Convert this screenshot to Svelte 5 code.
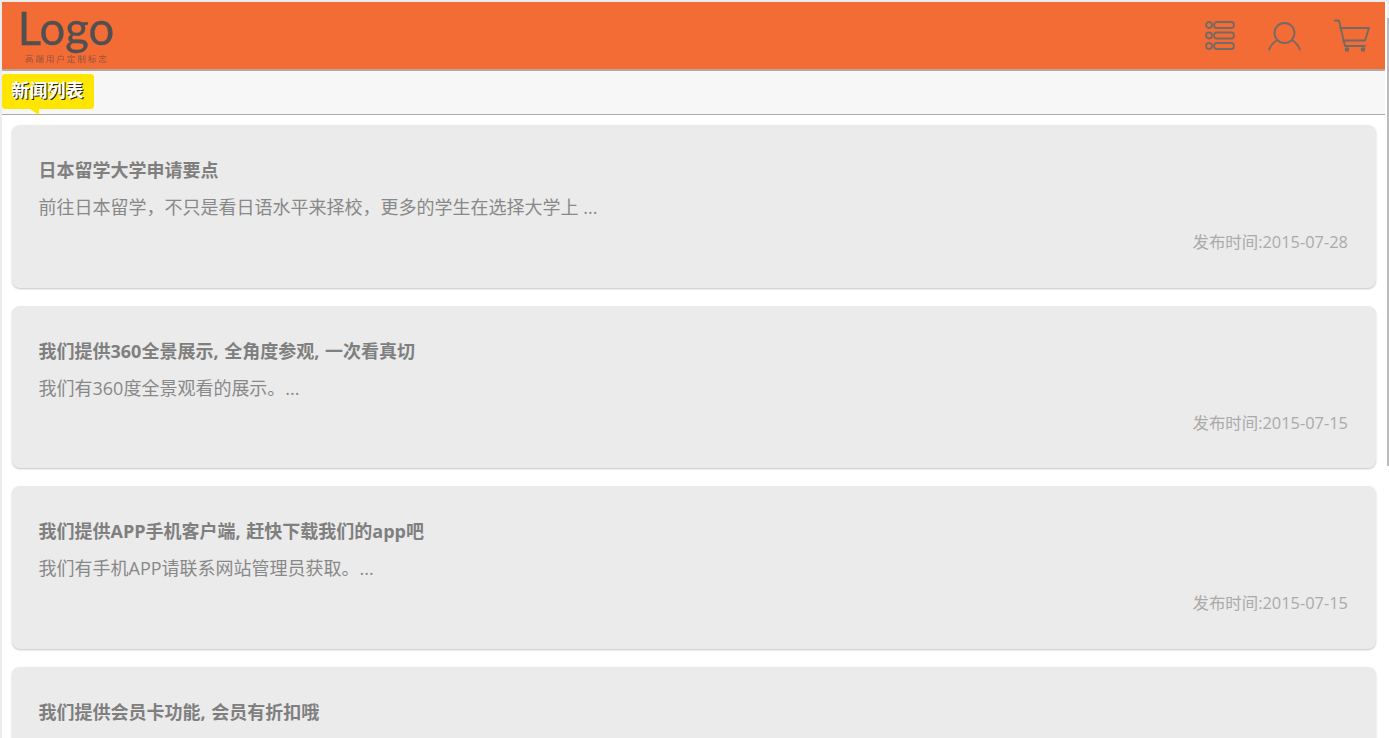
<script>
  const news = [
    { title: '日本留学大学申请要点', desc: '前往日本留学，不只是看日语水平来择校，更多的学生在选择大学上 ...', time: '2015-07-28' },
    { title: '我们提供360全景展示, 全角度参观, 一次看真切', desc: '我们有360度全景观看的展示。...', time: '2015-07-15' },
    { title: '我们提供APP手机客户端, 赶快下载我们的app吧', desc: '我们有手机APP请联系网站管理员获取。...', time: '2015-07-15' },
    { title: '我们提供会员卡功能, 会员有折扣哦' }
  ];
</script>

<div class="page">
  <header class="top">
    <div class="logo">
      <span class="logo-name">Logo</span>
      <span class="logo-sub">高端用户定制标志</span>
    </div>
    <nav class="icons">
      <svg width="30" height="30" viewBox="0 0 30 30">
        <circle cx="4" cy="4" r="3" />
        <circle cx="4" cy="14.5" r="3" />
        <circle cx="4" cy="25" r="3" />
        <rect x="9" y="1" width="20" height="6" rx="3" />
        <rect x="9" y="11.5" width="20" height="6" rx="3" />
        <rect x="9" y="22" width="20" height="6" rx="3" />
      </svg>
      <svg width="33" height="30" viewBox="0 0 33 30">
        <circle cx="16.5" cy="12" r="10" />
        <path d="M1 28.5 C3 24 5 21.5 8.5 19.5" />
        <path d="M32 28.5 C30 24 28 21.5 24.5 19.5" />
      </svg>
      <svg width="36" height="34" viewBox="0 0 36 34">
        <path d="M1 1.5 H5 L11 27 H31" />
        <path d="M6 9 H35 L31 21.5 H9" />
        <circle cx="13" cy="30.5" r="1.4" class="dot" />
        <circle cx="29" cy="30.5" r="1.4" class="dot" />
      </svg>
    </nav>
  </header>

  <div class="bar">
    <span class="tag">新闻列表</span>
  </div>

  <ul class="list-news">
    {#each news as item}
      <li class="card">
        <h3>{item.title}</h3>
        {#if item.desc}
          <p class="desc">{item.desc}</p>
          <p class="time">发布时间:{item.time}</p>
        {/if}
      </li>
    {/each}
  </ul>

  <div class="scroll"></div>
</div>

<style>
  :global(body) {
    background: #fff;
  }

  .page {
    position: relative;
    box-sizing: border-box;
    height: 738px;
    overflow: hidden;
    padding-right: 4px;
    border-top: 2px solid #ececec;
    border-left: 2px solid #ececec;
    font-family: "Open Sans", "Noto Sans CJK SC", sans-serif;
  }

  .top {
    display: flex;
    justify-content: space-between;
    align-items: center;
    height: 67px;
    background: #f36b35;
    border-bottom: 2px solid #b5a99f;
  }

  .logo {
    display: flex;
    flex-direction: column;
    align-items: center;
    margin: 0 0 1px 16px;
    width: 96px;
    color: #505050;
    filter: blur(0.4px);
  }

  .logo-name {
    font-family: Lato, sans-serif;
    font-size: 45.5px;
    line-height: 40px;
    -webkit-text-stroke: 0.3px #505050;
  }

  .logo-sub {
    margin-top: 5px;
    padding-left: 2px;
    font-family: "Noto Sans CJK SC", sans-serif;
    font-size: 8.5px;
    line-height: 10px;
    letter-spacing: 2px;
    color: #8e5540;
  }

  .icons {
    display: flex;
    align-items: center;
    gap: 33px;
    margin-right: 15px;
  }

  svg {
    fill: none;
    stroke: #746a64;
    stroke-width: 1.8;
    stroke-linecap: round;
    stroke-linejoin: round;
    filter: blur(0.3px);
  }

  svg .dot {
    fill: #746a64;
  }

  .bar {
    position: relative;
    height: 43px;
    background: #f7f7f7;
    border-bottom: 1px solid #aaa;
  }

  .tag {
    position: absolute;
    left: 0;
    top: 3px;
    width: 92px;
    height: 35px;
    box-sizing: border-box;
    padding-left: 9.5px;
    background: #ffe600;
    border-radius: 3px;
    color: #fff;
    font-size: 18px;
    font-weight: 700;
    line-height: 33px;
    text-shadow: 1px 1px 0 #222;
  }

  .tag::after {
    content: "";
    position: absolute;
    left: 28px;
    top: 35px;
    border-top: 6px solid #ffe600;
    border-left: 9px solid transparent;
  }

  .list-news {
    list-style: none;
    margin: 0;
    padding: 10px 9px 0 10px;
  }

  .card {
    box-sizing: border-box;
    height: 162.67px;
    margin-bottom: 18px;
    padding: 30px 28px 0 26.5px;
    background: #ebebeb;
    border-radius: 8px;
    box-shadow: 0 1px 2px #c4c4c4;
    color: #888;
    font-size: 18px;
    line-height: 30px;
  }

  .card h3 {
    margin: 0 0 7px;
    font-size: 18px;
    font-weight: 700;
    word-spacing: 1px;
    color: #7f7f7f;
  }

  .card p {
    margin: 0;
  }

  .card .desc {
    margin-bottom: 5px;
  }

  .time {
    text-align: right;
    font-size: 16.4px;
    color: #aaa;
  }

  .scroll {
    position: absolute;
    right: 0;
    top: 0;
    width: 2px;
    height: 448px;
    border-top: 16px solid #f1f1f1;
    background: #bbb;
  }
</style>
